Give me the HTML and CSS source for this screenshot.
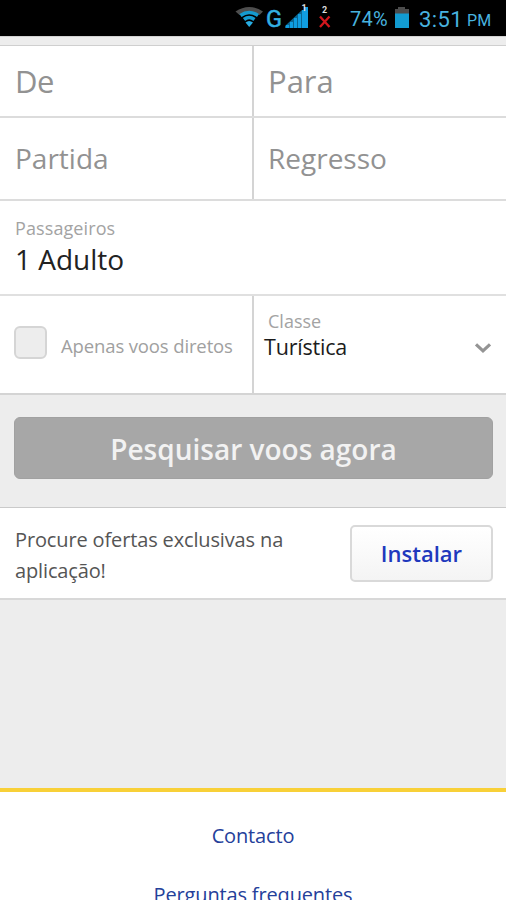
FILE: index.html
```html
<!DOCTYPE html>
<html lang="pt">
<head>
<meta charset="utf-8">
<title>Voos</title>
<link rel="stylesheet" href="styles.css">
</head>
<body>
<header class="status">
  <svg class="status-icons" width="110" height="36" viewBox="0 0 110 36">
    <path d="M0.500 11.500Q14 2.500 28 11.500L24.500 15Q14 8 4.500 15Z" fill="#4e4e4e"/>
    <g fill="none" stroke="#159bd0" stroke-width="3.600">
      <path d="M5.500 15.500Q14 9.500 23 15.500"/>
      <path d="M9 19.500Q14 15.500 19.500 19.500"/>
    </g>
    <path d="M10.500 22.500Q14 19.500 18 22.500L14.200 27Z" fill="#28ade2"/>
    <path d="M51 28v-3h3v3zM55 28v-6h3v6zM59 28v-10h3v10zM63 28v-14h3v14zM67 28v-18h2v-3h4v21z" fill="#109de0"/>
    <path d="M50 28v-2L67 10v18z" fill="#109de0" opacity=".65"/>
    <path d="M85 16.500L94.500 27M94.500 16.500L85 27" stroke="#d3171d" stroke-width="2.300"/>
    <text class="net" x="31" y="26.500" textLength="16" lengthAdjust="spacingAndGlyphs">G</text>
    <text class="sim" x="66.500" y="11">1</text>
    <text class="sim" x="87" y="13">2</text>
  </svg>
  <span class="percent">74%</span>
  <svg class="battery" width="16" height="36" viewBox="0 0 16 36">
    <path d="M4 7h7v2h4v5H1V9h3z" fill="#4c4c4c"/>
    <path d="M1 13.500h14V28H1z" fill="#129bd1"/>
  </svg>
  <span class="clock">3:51</span>
  <span class="pm">PM</span>
</header>
<main class="page">
  <form class="search">
    <div class="row places">
      <div class="cell"><span class="place de">De</span></div>
      <div class="cell"><span class="place para">Para</span></div>
    </div>
    <div class="row dates">
      <div class="cell"><span class="date partida">Partida</span></div>
      <div class="cell"><span class="date regresso">Regresso</span></div>
    </div>
    <div class="passengers">
      <span class="label pass-label">Passageiros</span>
      <span class="adult">1 Adulto</span>
    </div>
    <div class="row options">
      <div class="cell direct"><span class="check"></span><span class="direct-text">Apenas voos diretos</span></div>
      <div class="cell travel-class">
        <span class="label class-label">Classe</span>
        <div class="select"><span class="tur">Turística</span>
          <svg width="18" height="12" viewBox="0 0 18 12"><path d="M2 2.300L9 8.800L16 2.300" fill="none" stroke="#949494" stroke-width="3.200"/></svg>
        </div>
      </div>
    </div>
    <div class="submit"><button type="button" class="go"><span>Pesquisar voos agora</span></button></div>
  </form>
  <section class="promo">
    <p class="promo-text"><span class="l1">Procure ofertas exclusivas na</span><br><span class="l2">aplicação!</span></p>
    <button type="button" class="install"><span>Instalar</span></button>
  </section>
  <footer class="footer">
    <a class="contact">Contacto</a>
    <a class="faq">Perguntas frequentes</a>
  </footer>
</main>
</body>
</html>
```
FILE: styles.css
```css
* { box-sizing: border-box; }
body {
  margin: 0;
  height: 900px;
  overflow: hidden;
  background: #ededed;
  color: #929292;
  font-family: "Open Sans", sans-serif;
  display: flex;
  flex-direction: column;
}
span, a { white-space: nowrap; }
.status {
  height: 36px;
  flex: none;
  display: flex;
  background: #000;
  color: #48b3df;
  font-family: Roboto, sans-serif;
  line-height: 39px;
  padding-left: 235px;
}
.status-icons { flex: none; }
.net { font-size: 23px; fill: #33b0e3; stroke: #33b0e3; stroke-width: .5px; }
.sim { font-size: 9px; font-weight: 700; fill: #ddd; }
.percent { width: 44px; margin-left: 5px; font-size: 20px; letter-spacing: .2px; }
.battery { margin-right: 9px; flex: none; }
.clock { width: 48px; font-size: 22px; letter-spacing: .4px; }
.pm { font-size: 16px; line-height: 42px; letter-spacing: .2px; }
.page {
  flex: 1;
  min-height: 0;
  display: flex;
  flex-direction: column;
  padding-top: 8px;
  border-top: 1px solid #d2d2d2;
}
.search { flex: none; }
.row {
  display: grid;
  grid-template-columns: 254px 252px;
  background: #fff;
  border-bottom: 2px solid #dcdcdc;
}
.cell { padding-left: 14px; display: flex; align-items: center; }
.cell:first-child { padding-left: 15px; border-right: 2px solid #d4d4d4; }
.places { height: 73px; border-top: 1px solid #cfcfcf; }
.dates { height: 83px; }
.place { font-size: 31px; line-height: 70px; margin-top: -1px; }
.de { letter-spacing: -.4px; }
.date { font-size: 28px; line-height: 40px; margin-top: -1px; }
.passengers {
  height: 95px;
  padding: 16px 15px 0;
  display: flex;
  flex-direction: column;
  background: #fff;
  border-bottom: 2px solid #e0e0e0;
}
.label { color: #a3a3a3; font-size: 18px; line-height: 22px; }
.pass-label { letter-spacing: .1px; }
.adult { color: #222; font-size: 28px; line-height: 40px; }
.options { height: 99px; border-bottom-color: #d4d4d4; }
.check {
  width: 33px;
  height: 33px;
  margin: -5px 14px 0 -1px;
  flex: none;
  border: 2px solid #d5d5d5;
  border-radius: 6px;
  background: #ededed;
}
.direct-text { font-size: 18.500px; letter-spacing: -.13px; line-height: 26px; margin-top: 2px; color: #a0a0a0; }
.travel-class { flex-direction: column; align-items: stretch; padding-top: 14px; }
.select {
  display: flex;
  align-items: center;
  justify-content: space-between;
  margin-left: -4px;
  padding-right: 14px;
  height: 32px;
  color: #1c1c1c;
  font-size: 21.500px;
  letter-spacing: -.2px;
  line-height: 32px;
}
.tur { margin-top: -2px; }
.submit { height: 112px; padding: 22px 14px 0; }
button { display: block; font-family: inherit; padding: 0; text-align: center; }
.go {
  width: 479px;
  height: 62px;
  padding-top: 2px;
  border: 1px solid #a1a1a1;
  border-radius: 6px;
  background: #a7a7a7;
  color: #f2f2f2;
  font-size: 28px;
  font-weight: 600;
}
.promo {
  flex: none;
  height: 93px;
  display: flex;
  justify-content: space-between;
  background: #fff;
  border-top: 1px solid #cacaca;
  border-bottom: 2px solid #d8d8d8;
  padding: 17px 13px 0 15px;
}
.promo-text { margin: -1px 0 0; color: #555; font-size: 20px; letter-spacing: -.14px; line-height: 31px; }
.install {
  width: 143px;
  height: 57px;
  padding-bottom: 2px;
  border: 2px solid #d9d9d9;
  border-radius: 5px;
  background: linear-gradient(#fff, #f4f4f4);
  color: #2038bd;
  font-size: 22px;
  font-weight: 600;
}
.footer {
  flex: 1;
  min-height: 0;
  margin-top: 188px;
  padding-top: 28px;
  display: flex;
  flex-direction: column;
  align-items: center;
  gap: 28px;
  overflow: hidden;
  border-top: 4px solid #f8d038;
  background: #fff;
  color: #24409a;
  font-size: 20px;
  letter-spacing: -.15px;
  line-height: 31px;
}
.footer a { flex: none; }
```
